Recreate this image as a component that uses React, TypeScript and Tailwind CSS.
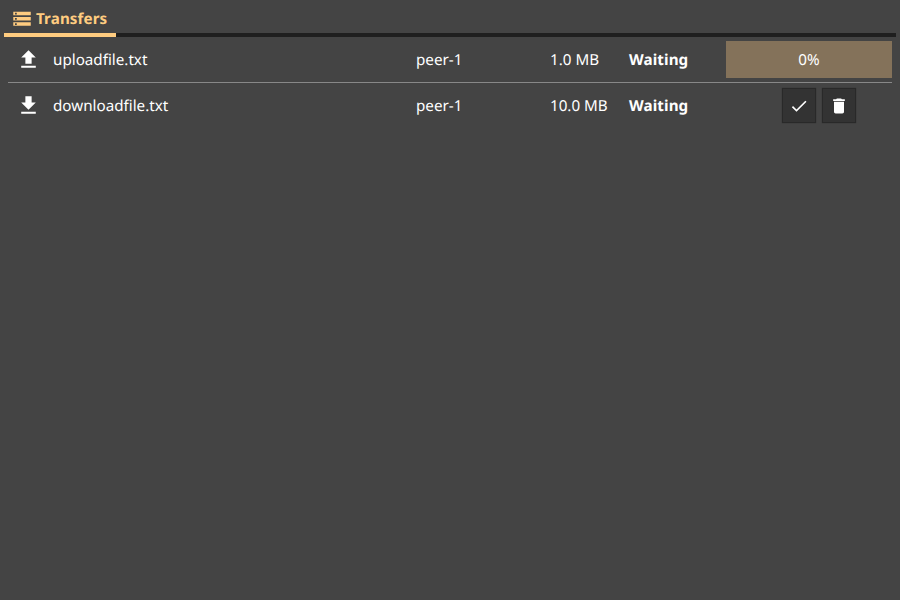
import React from "react";

const paths = {
  storage: "M2 20h20v-4H2v4zm2-3h2v2H4v-2zM2 4v4h20V4H2zm4 3H4V5h2v2zm-4 7h20v-4H2v4zm2-3h2v2H4v-2z",
  upload: "M5 20h14v-2H5v2zm0-10h4v6h6v-6h4l-7-7-7 7z",
  download: "M19 9h-4V3H9v6H5l7 7 7-7zM5 18v2h14v-2H5z",
  check: "M9 16.17 4.83 12l-1.42 1.41L9 19 21 7l-1.41-1.41z",
  remove: "M6 19c0 1.1.9 2 2 2h8c1.1 0 2-.9 2-2V7H6v12zM19 4h-3.5l-1-1h-5l-1 1H5v2h14V4z",
};

type IconProps = { name: keyof typeof paths; size: number; viewBox?: string };

function Icon({ name, size, viewBox = "0 0 24 24" }: IconProps) {
  return (
    <svg width={size} height={size} viewBox={viewBox} fill="currentColor" className="shrink-0">
      <path d={paths[name]} />
    </svg>
  );
}

function ActionButton({ icon }: { icon: "check" | "remove" }) {
  return (
    <button className="flex h-[35px] w-[34px] items-center justify-center border border-[#292929] bg-[#333333] shadow-[0_0_1px_#292929]">
      <Icon name={icon} size={20} />
    </button>
  );
}

type RowProps = {
  icon: "upload" | "download";
  name: string;
  size: string;
  children: React.ReactNode;
};

function TransferRow({ icon, name, size, children }: RowProps) {
  return (
    <div className="grid h-[45px] grid-cols-[45px_363px_134px_79px_97px_166px] items-center">
      <div className="pl-2">
        <Icon name={icon} size={25} />
      </div>
      <div>{name}</div>
      <div>peer-1</div>
      <div>{size}</div>
      <div className="font-bold tracking-[0.1px]">Waiting</div>
      {children}
    </div>
  );
}

export default function App() {
  return (
    <div className="h-[600px] w-[900px] overflow-hidden bg-[#444444] px-1 font-['Noto_Sans',sans-serif] text-[15.2px] leading-5 text-white [text-rendering:geometricPrecision]">
      <div className="flex h-[37px] border-b-4 border-[#1f1f1f]">
        <div className="flex h-[37px] w-28 shrink-0 items-center gap-1 border-b-4 border-[#ffcc80] pt-1 pl-[7px] font-bold tracking-[0.1px] text-[#ffcc80]">
          <Icon name="storage" size={21} viewBox="-0.6 -0.4 24 24" />
          <span>Transfers</span>
        </div>
      </div>
      <div className="px-1">
        <TransferRow icon="upload" name="uploadfile.txt" size="1.0 MB">
          <div className="flex h-[37px] items-center justify-center bg-[#84725a]">0%</div>
        </TransferRow>
        <div className="h-px bg-[#888888]" />
        <TransferRow icon="download" name="downloadfile.txt" size="10.0 MB">
          <div className="flex items-center gap-1.5 pl-14">
            <ActionButton icon="check" />
            <ActionButton icon="remove" />
          </div>
        </TransferRow>
      </div>
    </div>
  );
}
